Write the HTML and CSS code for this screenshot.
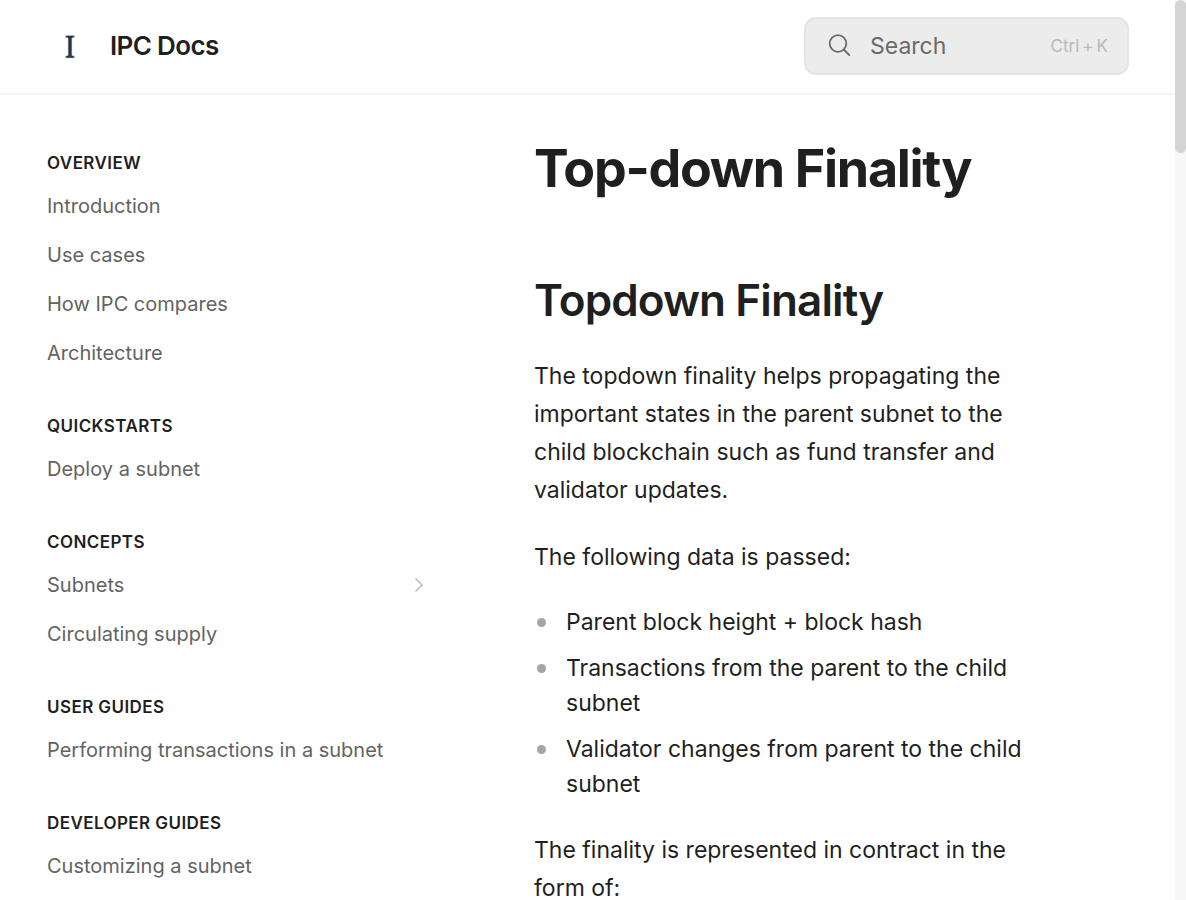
FILE: index.html
```html
<!DOCTYPE html>
<html lang="en">
<head>
<meta charset="utf-8">
<title>Top-down Finality | IPC Docs</title>
<link rel="stylesheet" href="styles.css">
</head>
<body>
<div class="window">
  <div class="page">
    <header class="header">
      <a class="brand" href="#">
        <svg class="logo" viewBox="0 0 46 46" aria-hidden="true">
          <path d="M19.700 12.500h8.600v1.900l-2.400.7v17.300l2.400.7V35h-8.600v-1.900l2.400-.7V15.100l-2.400-.7z" fill="#2c3444" stroke="#c9ccd4" stroke-width=".5"/>
        </svg>
        <span class="brand-name">IPC Docs</span>
      </a>
      <button class="search" type="button">
        <svg class="search-icon" viewBox="0 0 24 24" aria-hidden="true">
          <circle cx="10" cy="9.500" r="8.300"/>
          <path d="M15.800 15.500l6 6.200"/>
        </svg>
        <span class="search-label">Search</span>
        <span class="shortcut"><span>Ctrl</span><span>+</span><span>K</span></span>
      </button>
    </header>
    <div class="columns">
      <nav class="sidebar" aria-label="Table of contents">
        <section class="group">
          <h2 class="group-title">Overview</h2>
          <a class="item" href="#">Introduction</a>
          <a class="item" href="#">Use cases</a>
          <a class="item" href="#">How IPC compares</a>
          <a class="item" href="#">Architecture</a>
        </section>
        <section class="group">
          <h2 class="group-title">Quickstarts</h2>
          <a class="item" href="#">Deploy a subnet</a>
        </section>
        <section class="group">
          <h2 class="group-title">Concepts</h2>
          <a class="item" href="#">Subnets
            <svg class="chevron" viewBox="0 0 10 16" aria-hidden="true"><path d="M1.500 1.500L8 8l-6.500 6.500"/></svg>
          </a>
          <a class="item" href="#">Circulating supply</a>
        </section>
        <section class="group">
          <h2 class="group-title">User guides</h2>
          <a class="item" href="#">Performing transactions in a subnet</a>
        </section>
        <section class="group">
          <h2 class="group-title">Developer guides</h2>
          <a class="item" href="#">Customizing a subnet</a>
        </section>
      </nav>
      <main class="content">
        <h1 class="title">Top-down Finality</h1>
        <h2 class="subtitle">Topdown Finality</h2>
        <p class="text">The topdown finality helps propagating the important states in the parent subnet to the child blockchain such as fund transfer and validator updates.</p>
        <p class="text">The following data is passed:</p>
        <ul class="list">
          <li class="entry">Parent block height + block hash</li>
          <li class="entry">Transactions from the parent to the child subnet</li>
          <li class="entry">Validator changes from parent to the child subnet</li>
        </ul>
        <p class="text">The finality is represented in contract in the form of:</p>
      </main>
    </div>
  </div>
  <div class="scrollbar" aria-hidden="true"><div class="thumb"></div></div>
</div>
</body>
</html>
```
FILE: styles.css
```css
* { box-sizing: border-box; }

body {
  margin: 0;
  background: #fff;
  color: #1f1f1f;
  font-family: Inter, "Liberation Sans", sans-serif;
}

h1, h2, p, ul { margin: 0; padding: 0; }
a { color: inherit; text-decoration: none; }

.window { display: flex; height: 100vh; overflow: hidden; }
.page { flex: 1; min-width: 0; }

.scrollbar { width: 11px; background: #f7f7f7; }
.thumb { height: 17%; border-radius: 6px; background: #d4d4d4; }

.header {
  display: flex;
  align-items: center;
  justify-content: space-between;
  height: 95px;
  padding: 0 46px 2px;
  border-bottom: 2px solid #f4f4f4;
}

.brand { display: flex; align-items: center; gap: 18px; }
.logo { width: 46px; height: 46px; }
.brand-name { font-size: 26px; line-height: 36px; font-weight: 600; letter-spacing: -0.025em; }

.search {
  display: flex;
  align-items: center;
  width: 325px;
  height: 58px;
  padding: 0 19px 0 22px;
  border: 2px solid #e4e4e4;
  border-radius: 12px;
  background: #ececec;
  color: #6a6a6a;
  font: inherit;
  font-size: 23px;
  text-align: left;
}
.search-icon { width: 24px; height: 24px; fill: none; stroke: #6a6a6a; stroke-width: 1.8; }
.search-label { flex: 1; margin-left: 18px; }
.shortcut { display: flex; gap: 3px; font-size: 17px; color: #b9b9b9; }

.columns { display: flex; gap: 104px; }

.sidebar { flex: none; width: 430px; padding: 47px 0 0 47px; }
.group { margin-bottom: 28px; }
.group-title {
  padding-top: 3px;
  font-size: 17px;
  line-height: 36px;
  font-weight: 600;
  letter-spacing: 0.025em;
  text-transform: uppercase;
}
.item {
  display: flex;
  align-items: center;
  justify-content: space-between;
  height: 49px;
  font-size: 20px;
  color: #636363;
}
.chevron { width: 10px; height: 16px; margin-right: 6px; fill: none; stroke: #b4b4b4; stroke-width: 1.4; }

.content { flex: 1; min-width: 0; padding: 42px 126px 0 0; }
.title { font-size: 52px; line-height: 64px; font-weight: 700; letter-spacing: -0.025em; }
.subtitle { margin-top: 71px; font-size: 44px; line-height: 56px; font-weight: 600; letter-spacing: -0.02em; }
.text { margin-top: 29px; font-size: 23px; line-height: 38px; }
.list {
  display: grid;
  gap: 11px;
  margin-top: 29px;
  list-style: none;
  font-size: 23px;
  line-height: 35px;
}
.entry { display: flex; gap: 20px; padding-left: 3px; }
.entry::before {
  content: "";
  flex: none;
  width: 9px;
  height: 9px;
  margin-top: 13px;
  border-radius: 50%;
  background: #a5a5a5;
}
```
